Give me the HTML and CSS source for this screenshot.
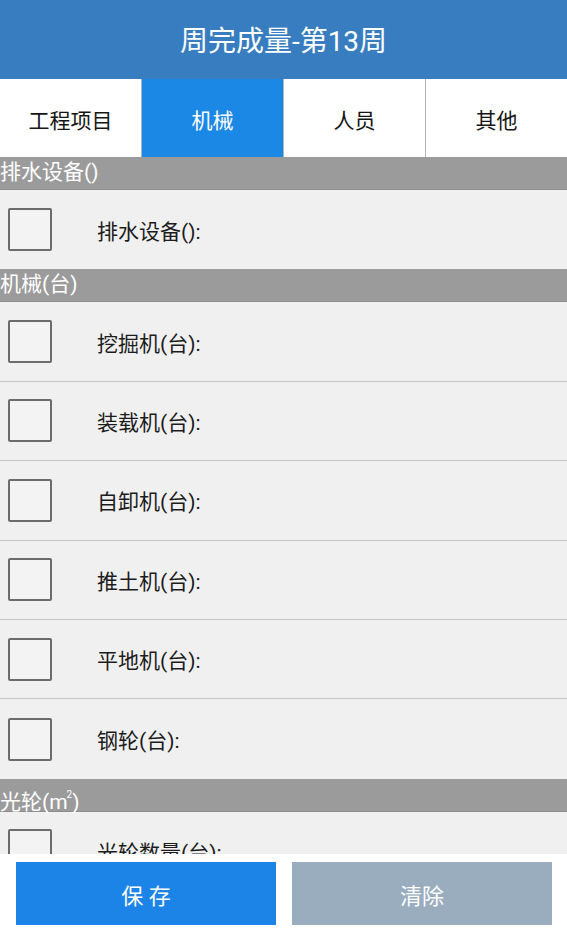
FILE: index.html
```html
<!DOCTYPE html>
<html lang="zh-CN">
<head>
<meta charset="utf-8">
<title>周完成量-第13周</title>
<link rel="stylesheet" href="styles.css">
</head>
<body>
<div class="app">
  <header class="title-bar">周完成量-第13周</header>
  <nav class="tabs">
    <div class="tab">工程项目</div>
    <div class="tab active">机械</div>
    <div class="tab">人员</div>
    <div class="tab last">其他</div>
  </nav>
  <main class="content">
    <div class="section-head">排水设备()</div>
    <div class="row last-row"><span class="check"></span><span class="label">排水设备():</span></div>

    <div class="section-head">机械(台)</div>
    <div class="row"><span class="check"></span><span class="label">挖掘机(台):</span></div>
    <div class="row"><span class="check"></span><span class="label">装载机(台):</span></div>
    <div class="row"><span class="check"></span><span class="label">自卸机(台):</span></div>
    <div class="row"><span class="check"></span><span class="label">推土机(台):</span></div>
    <div class="row"><span class="check"></span><span class="label">平地机(台):</span></div>
    <div class="row last-row"><span class="check"></span><span class="label">钢轮(台):</span></div>

    <div class="section-head">光轮(m<sup class="sq">2</sup>)</div>
    <div class="row"><span class="check"></span><span class="label">光轮数量(台):</span></div>
  </main>
  <footer class="actions">
    <button class="btn save">保 存</button>
    <button class="btn clear">清除</button>
  </footer>
</div>
</body>
</html>
```

FILE: styles.css
```css
html, body {
  margin: 0;
  padding: 0;
  background: #ffffff;
}

body {
  font-family: Roboto, "Noto Sans CJK SC", "Noto Sans", sans-serif;
}

.app {
  width: 567px;
  height: 928px;
  display: flex;
  flex-direction: column;
  overflow: hidden;
}

.title-bar {
  height: 79px;
  flex: none;
  background: #377dbf;
  color: #ffffff;
  font-size: 28px;
  display: flex;
  align-items: center;
  justify-content: center;
  padding-bottom: 2px;
  box-sizing: border-box;
}

.tabs {
  height: 78px;
  flex: none;
  display: grid;
  grid-template-columns: 142px 142px 142px 141px;
  background: #ffffff;
}

.tab {
  display: flex;
  align-items: center;
  justify-content: center;
  font-size: 21px;
  color: #151515;
  border-right: 1px solid #b4b4b4;
  padding-top: 2px;
}

.tab.last {
  border-right: none;
}

.tab.active {
  background: #1c88e6;
  color: #ffffff;
}

.content {
  flex: 1;
  overflow: hidden;
  background: #f0f0f0;
}

.section-head {
  height: 33px;
  box-sizing: border-box;
  background: #9b9b9b;
  border-bottom: 1px solid #8e8e8e;
  color: #ffffff;
  font-size: 21px;
  line-height: 31px;
  padding-left: 0;
  white-space: nowrap;
}

.sq {
  font-size: 10px;
  vertical-align: 11px;
  margin-left: -1px;
}

.row {
  height: 79.4px;
  box-sizing: border-box;
  border-bottom: 1px solid #c4c4c4;
  display: flex;
  align-items: center;
  background: #f0f0f0;
}

.row.last-row {
  border-bottom: none;
}

.check {
  width: 44px;
  height: 43px;
  box-sizing: border-box;
  margin-left: 8px;
  border: 2px solid #6b6b6b;
  border-radius: 2px;
  background: #f3f3f3;
  flex: none;
}

.label {
  margin-left: 45px;
  font-size: 21px;
  color: #1c1c1c;
}

.actions {
  height: 74px;
  flex: none;
  background: #ffffff;
  display: flex;
  gap: 16px;
  padding: 8px 15px 0 16px;
  box-sizing: border-box;
}

.btn {
  width: 260px;
  height: 63px;
  border: none;
  border-radius: 0;
  color: #ffffff;
  font-family: Roboto, "Noto Sans CJK SC", sans-serif;
  font-size: 22px;
  padding: 0;
}

.btn.save {
  background: #1c84e6;
}

.btn.clear {
  background: #9aadbf;
}
```
